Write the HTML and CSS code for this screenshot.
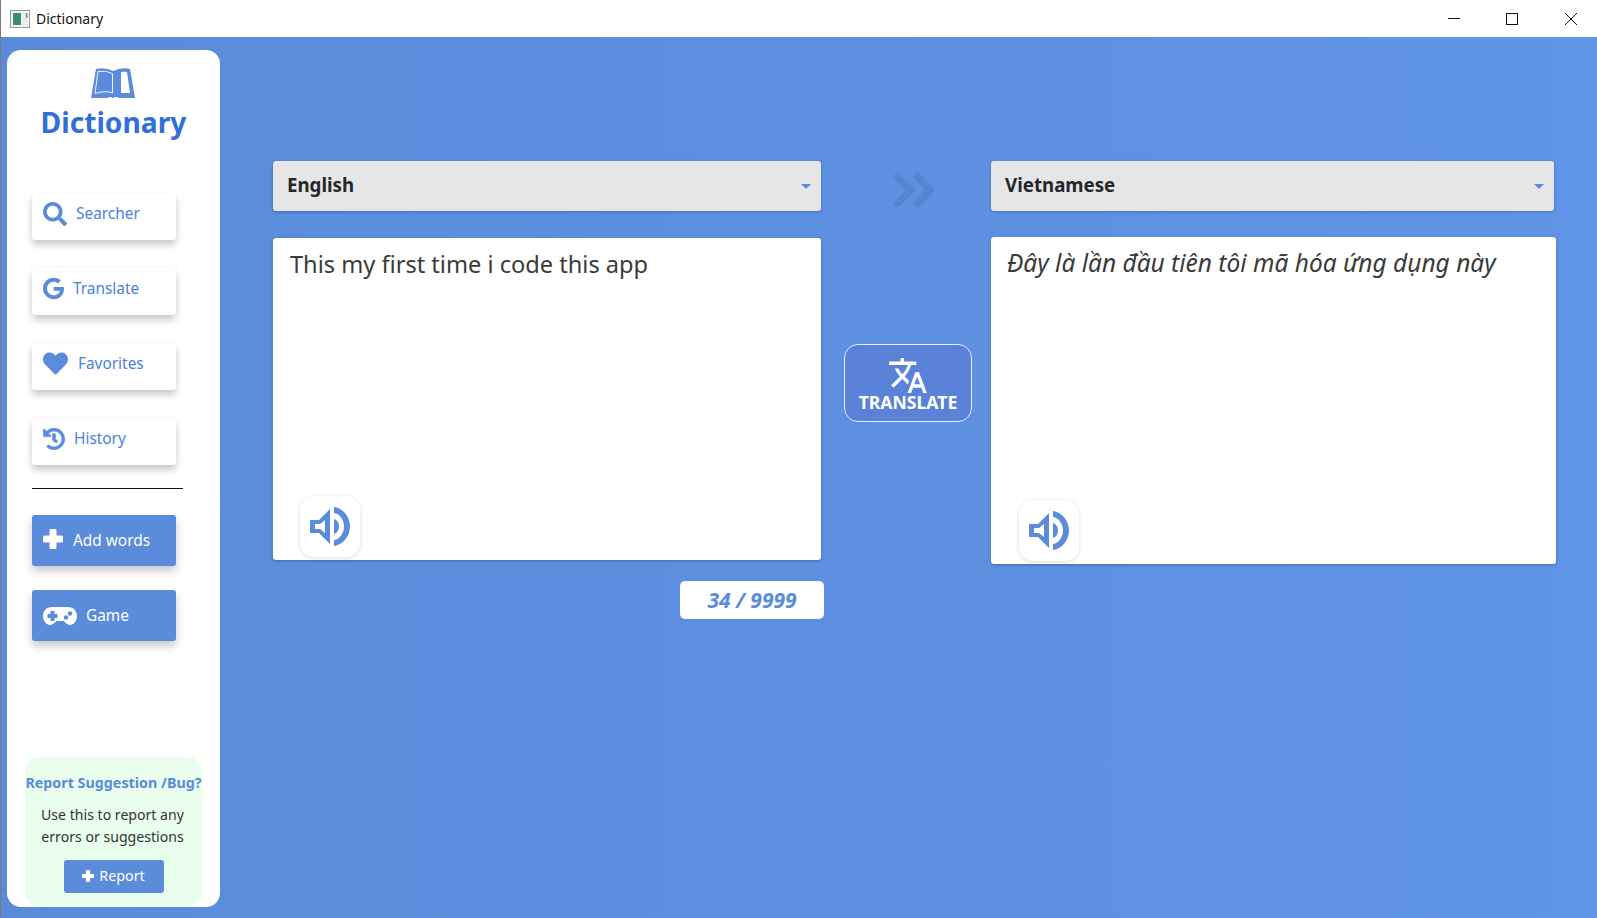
FILE: index.html
```html
<!DOCTYPE html>
<html lang="en">
<head>
<meta charset="utf-8">
<title>Dictionary</title>
<link rel="stylesheet" href="styles.css">
</head>
<body>
<div class="window">
  <header class="titlebar">
    <svg class="app-icon" viewBox="0 0 20 18"><rect x="0.5" y="0.5" width="19" height="17" fill="#f4f6f5" stroke="#9a9a9a"/><rect x="3" y="3" width="8" height="12" fill="#3f8a72"/><rect x="12" y="3" width="5" height="12" fill="#e4eee8"/><rect x="16" y="3" width="1.5" height="5" fill="#6c8a80"/></svg>
    <span class="app-title">Dictionary</span>
    <div class="win-controls">
      <svg class="win-icon" viewBox="0 0 12 12"><path d="M0 5.5H12" stroke="#111" fill="none"/></svg>
      <svg class="win-icon" viewBox="0 0 12 12"><rect x="0.5" y="0.5" width="11" height="11" stroke="#111" fill="none"/></svg>
      <svg class="win-icon" viewBox="0 0 12 12"><path d="M0 0L12 12M12 0L0 12" stroke="#111" fill="none"/></svg>
    </div>
  </header>
  <div class="app">
    <aside class="sidebar">
      <div class="brand">
        <svg class="book" viewBox="0 0 44 30"><path d="M5 1Q14-1 22 3Q30-1 39 1L44 30H28Q25 28 22 30Q19 28 16 30H0Z" fill="#5b8bdb"/><path d="M7 3.500Q15 2 21.500 5.500V25Q15 22 4 25.500Z" fill="none" stroke="#fff" stroke-width="0.9"/><path d="M30 4Q33 3.500 36 4L39 25H30Z" fill="#fff"/></svg>
        <div class="brand-name">Dictionary</div>
      </div>
      <nav class="nav">
        <a class="nav-btn"><svg class="i i-search" viewBox="0 0 512 512"><path d="M505 442.700L405.300 343c-4.500-4.500-10.600-7-17-7H372c27.600-35.300 44-79.700 44-128C416 93.100 322.900 0 208 0S0 93.100 0 208s93.100 208 208 208c48.300 0 92.700-16.400 128-44v16.300c0 6.400 2.500 12.500 7 17l99.700 99.700c9.400 9.400 24.600 9.400 33.900 0l28.300-28.300c9.400-9.400 9.400-24.600.1-34zM208 336c-70.700 0-128-57.200-128-128 0-70.700 57.200-128 128-128 70.700 0 128 57.200 128 128 0 70.700-57.200 128-128 128z"/></svg><span class="lbl-search">Searcher</span></a>
        <a class="nav-btn"><svg class="i i-google" viewBox="0 0 488 512"><path d="M488 261.800C488 403.300 391.100 504 248 504 110.800 504 0 393.200 0 256S110.800 8 248 8c66.800 0 123 24.500 166.300 64.900l-67.500 64.900C258.500 52.600 94.300 116.600 94.300 256c0 86.500 69.100 156.600 153.700 156.600 98.200 0 135-70.400 140.800-106.900H248v-85.300h236.100c2.300 12.700 3.900 24.900 3.900 41.400z"/></svg><span>Translate</span></a>
        <a class="nav-btn"><svg class="i i-heart" viewBox="0 0 512 512"><path d="M462.300 62.600C407.500 15.900 326 24.300 275.700 76.200L256 96.500l-19.700-20.300C186.100 24.300 104.500 15.900 49.700 62.600c-62.800 53.600-66.100 149.800-9.900 207.900l193.500 199.800c12.500 12.900 32.800 12.900 45.300 0l193.500-199.800c56.300-58.100 53-154.300-9.800-207.900z"/></svg><span>Favorites</span></a>
        <a class="nav-btn"><svg class="i i-history" viewBox="0 0 512 512"><path d="M504 255.531c.253 136.640-111.180 248.372-247.820 248.468-59.015.042-113.223-20.530-155.822-54.911-11.077-8.940-11.905-25.541-1.839-35.607l11.267-11.267c8.609-8.609 22.353-9.551 31.891-1.984C173.062 425.135 212.781 440 256 440c101.705 0 184-82.311 184-184 0-101.705-82.311-184-184-184-48.814 0-93.149 18.969-126.068 49.932l50.754 50.754c10.080 10.080 2.941 27.314-11.313 27.314H24c-8.837 0-16-7.163-16-16V38.627c0-14.254 17.234-21.393 27.314-11.314l49.372 49.372C129.209 34.136 189.552 8 256 8c136.810 0 247.747 110.780 248 247.531zm-180.912 78.784l9.823-12.630c8.138-10.463 6.253-25.542-4.210-33.679L288 256.349V152c0-13.255-10.745-24-24-24h-16c-13.255 0-24 10.745-24 24v135.651l65.409 50.874c10.463 8.137 25.541 6.253 33.679-4.210z"/></svg><span>History</span></a>
      </nav>
      <hr class="divider">
      <div class="actions">
        <a class="act-btn"><svg class="i i-plus" viewBox="0 0 20 20"><rect x="6.500" y="0" width="7" height="20" rx="1.500"/><rect x="0" y="6.500" width="20" height="7" rx="1.500"/></svg><span>Add words</span></a>
        <a class="act-btn"><svg class="i i-game" viewBox="0 0 34 18"><path d="M9 0H25C30.500 0 34 4 34 9C34 14 30.500 18 27 18C24 18 22.500 15.500 20.500 14H13.500C11.500 15.500 10 18 7 18C3.500 18 0 14 0 9C0 4 3.500 0 9 0Z" fill="#fff"/><path d="M7.500 4H11.500V7H14.500V11H11.500V14H7.500V11H4.500V7H7.500Z" fill="#5b8bdb"/><circle cx="27" cy="6.500" r="2.200" fill="#5b8bdb"/><circle cx="23" cy="10.500" r="2.200" fill="#5b8bdb"/></svg><span>Game</span></a>
      </div>
      <section class="report">
        <h3 class="report-title">Report Suggestion /Bug?</h3>
        <p class="report-text">Use this to report any<br>errors or suggestions</p>
        <a class="report-btn"><svg class="i i-plus-s" viewBox="0 0 20 20"><rect x="6.500" y="0" width="7" height="20" rx="1.500"/><rect x="0" y="6.500" width="20" height="7" rx="1.500"/></svg><span>Report</span></a>
      </section>
    </aside>
    <main class="workspace">
      <section class="col col-left">
        <div class="select"><span>English</span><i class="caret"></i></div>
        <div class="panel panel-left">
          <div class="text">This my first time i code this app</div>
          <button class="speak" aria-label="Listen"><svg class="speaker" viewBox="0 0 40 39"><path fill-rule="evenodd" d="M0 13H9L20 2V37L9 26H0ZM5 17V22H10L15 26V13L10 17Z"/><path d="M24 0C33 1 40 10 40 19.500S33 38 24 39V33C30 32 34 26 34 19.500S30 7 24 6Z"/><path d="M24 12C27 13 29 16 29 19.500S27 26 24 27Z"/></svg></button>
        </div>
        <div class="count">34 / 9999</div>
      </section>
      <section class="col-mid">
        <svg class="arrows" viewBox="0 0 42 36"><path d="M3 3L18 18L3 33M22.500 3L37.500 18L22.500 33" fill="none" stroke="#5486d6" stroke-width="5"/></svg>
        <button class="translate"><svg class="t-icon" viewBox="1.500 2 21.500 20"><path d="M12.870 15.070l-2.540-2.510.03-.03c1.740-1.940 2.980-4.170 3.710-6.530H17V4h-7V2H8v2H1v1.990h11.170C11.500 7.920 10.440 9.750 9 11.350 8.070 10.320 7.300 9.190 6.690 8h-2c.73 1.630 1.730 3.170 2.980 4.560l-5.090 5.020L4 19l5-5 3.110 3.110.76-2.040zM18.500 10h-2L12 22h2l1.120-3h4.750L21 22h2l-4.500-12zm-2.620 7l1.620-4.330L19.120 17h-3.240z"/></svg><span>TRANSLATE</span></button>
      </section>
      <section class="col col-right">
        <div class="select select-right"><span>Vietnamese</span><i class="caret"></i></div>
        <div class="panel panel-right">
          <div class="text text-it">Đây là lần đầu tiên tôi mã hóa ứng dụng này</div>
          <button class="speak speak-right" aria-label="Listen"><svg class="speaker" viewBox="0 0 40 39"><path fill-rule="evenodd" d="M0 13H9L20 2V37L9 26H0ZM5 17V22H10L15 26V13L10 17Z"/><path d="M24 0C33 1 40 10 40 19.500S33 38 24 39V33C30 32 34 26 34 19.500S30 7 24 6Z"/><path d="M24 12C27 13 29 16 29 19.500S27 26 24 27Z"/></svg></button>
        </div>
      </section>
    </main>
  </div>
</div>
</body>
</html>
```

FILE: styles.css
```css
* { box-sizing: border-box; }
html, body { margin: 0; padding: 0; height: 100%; overflow: hidden; }
body { font-family: "Noto Sans", "Open Sans", sans-serif; background: #5f92e4; }
.window { width: 1597px; height: 918px; display: flex; flex-direction: column; border-left: 1px solid #7a7a7a; }

.titlebar { height: 37px; background: #fff; display: flex; align-items: center; padding: 0 20px 0 9px; flex: none; }
.app-icon { width: 20px; height: 18px; margin-right: 6px; }
.app-title { font-size: 14px; color: #111; }
.win-controls { margin-left: auto; display: flex; gap: 46px; }
.win-icon { width: 12px; height: 12px; display: block; }
.win-icon:last-child { margin-left: 1px; }

.app { flex: 1; display: flex; background: linear-gradient(90deg, #5a8bdb, #6094e6); min-height: 0; }

.sidebar { width: 213px; height: 857px; margin: 13px 0 0 6px; background: #fff; border-radius: 14px; display: flex; flex-direction: column; flex: none; }
.brand { display: flex; flex-direction: column; align-items: center; padding: 18px 0 0 0; height: 143px; }
.book { width: 44px; height: 30px; display: block; margin-left: -1px; }
.brand-name { font-size: 28.200px; font-weight: 700; color: #2f6fd8; line-height: 40px; margin-top: 4px; }

.nav { display: flex; flex-direction: column; gap: 28px; padding-left: 25px; }
.nav-btn, .act-btn { width: 144px; display: flex; align-items: center; font-size: 15.400px; border-radius: 3px; padding-left: 11px; }
.nav-btn { height: 47px; padding-bottom: 6px; background: #fff; color: #4a80e0; box-shadow: 0 5px 7px rgba(0, 0, 0, .2), 0 0 4px rgba(0, 0, 0, .03); }
.act-btn { height: 51px; background: #5b8bdb; color: #fff; box-shadow: 0 5px 8px rgba(0, 0, 0, .22); }

.i { display: block; flex: none; fill: #5b8bdb; }
.i-search { width: 24px; height: 24px; margin-right: 9px; }
.i-google { width: 21px; height: 23px; margin-right: 9px; }
.i-heart { width: 25px; height: 25px; margin-right: 10px; }
.i-history { width: 22px; height: 22px; margin-right: 9px; stroke: #5b8bdb; stroke-width: 16; }
.i-plus { width: 20px; height: 20px; fill: #fff; margin: 0 10px 3px 0; }
.i-game { width: 34px; height: 18px; margin-right: 9px; }
.i-plus-s { width: 12px; height: 12px; fill: #fff; margin-right: 5px; }

.divider { width: 151px; height: 1px; margin: 23px 0 26px 25px; border: 0; background: #111; flex: none; }
.actions { display: flex; flex-direction: column; gap: 24px; padding-left: 25px; }

.report { margin: auto 0 1px 18px; width: 177px; height: 149px; background: #eafeee; border-radius: 14px; display: flex; flex-direction: column; align-items: center; }
.report-title { margin: 16px 0 0; font-size: 14.300px; font-weight: 700; line-height: 20px; color: #5b8bdb; white-space: nowrap; }
.report-text { margin: 11px 0 0; padding-right: 2px; font-size: 14.100px; line-height: 22px; color: #333; text-align: center; }
.report-btn { margin-top: 12px; width: 100px; height: 33px; padding-bottom: 2px; background: #5b8bdb; color: #fff; border-radius: 3px; display: flex; align-items: center; justify-content: center; font-size: 14.300px; }

.workspace { display: flex; margin-left: 53px; flex: 1; min-width: 0; }
.col { display: flex; flex-direction: column; flex: none; }
.col-left { width: 551px; padding-top: 124px; }
.col-right { width: 565px; padding-top: 124px; }
.select { width: 548px; height: 50px; background: #e6e6e6; border-radius: 3px; display: flex; align-items: center; justify-content: space-between; padding: 0 10px 3px 14px; font-size: 18.700px; font-weight: 700; color: #24262b; box-shadow: 0 1px 3px rgba(0, 0, 0, .25); }
.select-right { width: 563px; }
.caret { width: 0; height: 0; border: 5px solid transparent; border-top: 5px solid #5b8bdb; border-bottom: 0; margin-top: 3px; }

.panel { background: #fff; border-radius: 3px; display: flex; flex-direction: column; box-shadow: 0 1px 3px rgba(0, 0, 0, .25); }
.panel-left { width: 548px; height: 322px; margin-top: 27px; padding: 8px 16px 3px 17px; }
.panel-right { width: 565px; height: 327px; margin-top: 26px; padding: 8px 16px 3px; }
.text { font-size: 23.600px; line-height: 36px; color: #3a3a3a; }
.text-it { font-style: italic; font-size: 24.500px; }
.speak { margin: auto 0 0 10px; width: 60px; height: 61px; padding: 0; border: 0; background: #fff; border-radius: 14px; box-shadow: 0 1px 4px rgba(0, 0, 0, .14); display: flex; align-items: center; justify-content: center; flex: none; }
.speak-right { margin-left: 12px; }
.speaker { width: 40px; height: 39px; fill: #5b8bdb; display: block; }

.count { align-self: flex-end; margin-top: 21px; width: 144px; height: 38px; padding-bottom: 1px; background: #fff; border-radius: 5px; display: flex; align-items: center; justify-content: center; font-size: 21px; font-weight: 700; font-style: italic; color: #5b8bdb; }

.col-mid { width: 167px; flex: none; display: flex; flex-direction: column; align-items: flex-start; padding-top: 134px; }
.arrows { width: 42px; height: 36px; margin-left: 69px; display: block; filter: drop-shadow(0 1px 1px rgba(0, 0, 0, .2)); }
.translate { margin: 137px 0 0 20px; width: 128px; height: 78px; background: #5a82d8; border: 1.500px solid #e8eefb; border-radius: 14px; display: flex; flex-direction: column; align-items: center; color: #fff; font-family: inherit; font-size: 17.600px; font-weight: 700; padding: 13px 0 0; line-height: 18px; }
.t-icon { width: 38px; height: 35px; fill: #fff; display: block; }
```
